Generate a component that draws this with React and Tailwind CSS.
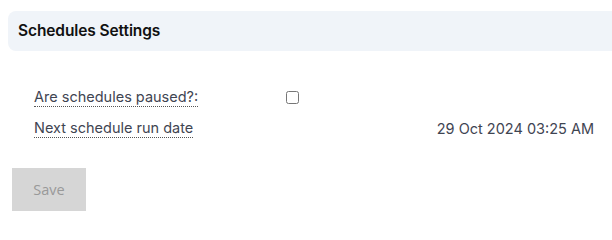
export default function App() {
  return (
    <div className="w-[612px] h-[221px] bg-white overflow-hidden" style={{ fontFamily: "Inter, 'Liberation Sans', sans-serif" }}>
      <div className="pt-[11px] pl-2">
        <div className="h-10 bg-[#f0f4f9] rounded-l-lg flex items-center pl-2.5">
          <h2 className="text-[15.5px] font-semibold text-[#111] tracking-[-0.1px]">Schedules Settings</h2>
        </div>
      </div>

      <div className="pl-[34px] pr-[18px] pt-[36px] grid grid-cols-[252px_1fr] gap-y-[10px] text-[14.5px] text-[#3f4552]">
        <div className="flex items-center h-[21px]">
          <span className="border-b border-dotted border-[#555] leading-[18px]">Are schedules paused?:</span>
        </div>
        <div className="flex items-center h-[21px]">
          <input type="checkbox" className="w-[13px] h-[13px] m-0" />
        </div>
        <div className="flex items-center h-[21px]">
          <span className="border-b border-dotted border-[#555] leading-[18px]">Next schedule run date</span>
        </div>
        <div className="flex items-center justify-end h-[21px]">
          <span>29 Oct 2024 03:25 AM</span>
        </div>
      </div>

      <div className="pl-3 pt-[29px]">
        <button
          type="button"
          disabled
          className="w-[74px] h-[43px] bg-[#d6d6d6] text-[#999] text-[14.5px]"
          style={{ fontFamily: "'Open Sans', sans-serif" }}
        >
          Save
        </button>
      </div>
    </div>
  );
}
